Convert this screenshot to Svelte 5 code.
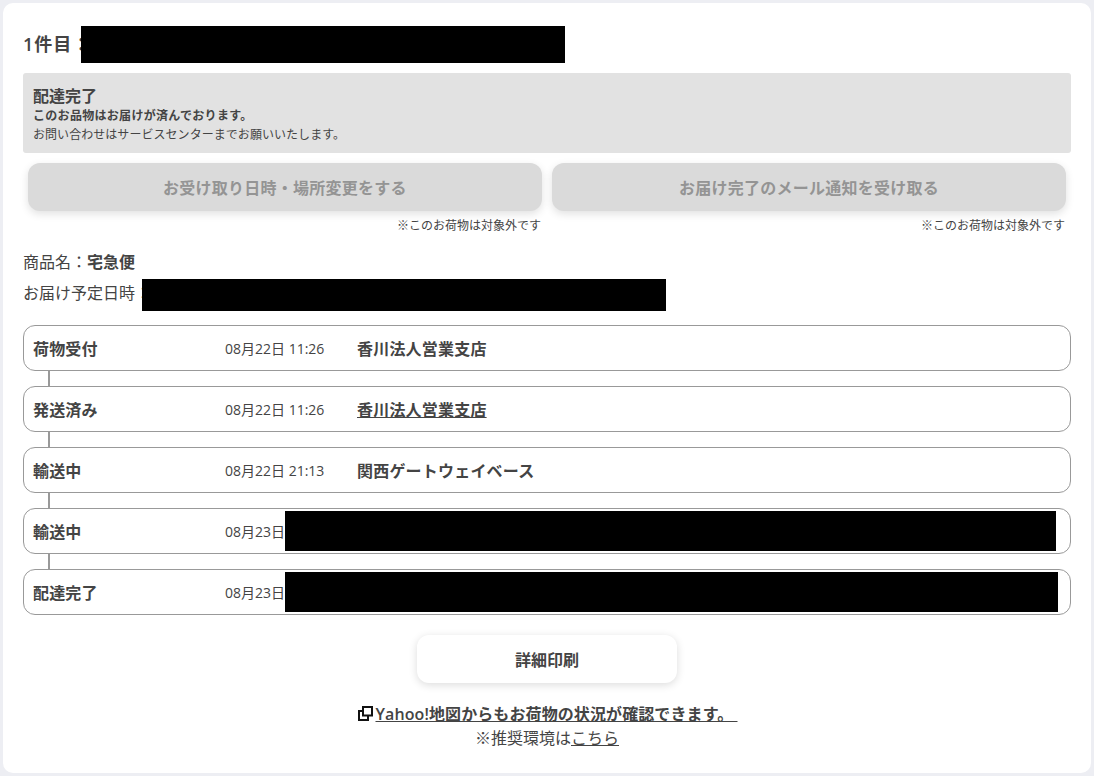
<script>
  const steps = [
    { label: "荷物受付", date: "08月22日 11:26", place: "香川法人営業支店" },
    { label: "発送済み", date: "08月22日 11:26", place: "香川法人営業支店", link: true },
    { label: "輸送中", date: "08月22日 21:13", place: "関西ゲートウェイベース" },
    { label: "輸送中", date: "08月23日", hidden: 771 },
    { label: "配達完了", date: "08月23日", hidden: 773 }
  ];
</script>

<div class="page">
  <div class="card">
    <h2 class="title">1件目：<span class="redact title-redact"></span></h2>

    <div class="status">
      <div class="status-head">配達完了</div>
      <div class="status-sub">このお品物はお届けが済んでおります。</div>
      <div class="status-note">お問い合わせはサービスセンターまでお願いいたします。</div>
    </div>

    <div class="actions">
      <div class="action">
        <div class="btn-off">お受け取り日時・場所変更をする</div>
        <div class="note">※このお荷物は対象外です</div>
      </div>
      <div class="action">
        <div class="btn-off">お届け完了のメール通知を受け取る</div>
        <div class="note">※このお荷物は対象外です</div>
      </div>
    </div>

    <div class="info">商品名：<b>宅急便</b></div>
    <div class="info due">お届け予定日時：<span class="redact due-redact"></span></div>

    <ul class="timeline">
      {#each steps as s, i}
        <li class="step" class:last={i === steps.length - 1}>
          <span class="label">{s.label}</span>
          <span class="date">{s.date}</span>
          {#if s.place}
            <span class="place" class:link={s.link}>{s.place}</span>
          {/if}
          {#if s.hidden}
            <span class="redact step-redact" style="width: {s.hidden}px"></span>
          {/if}
        </li>
      {/each}
    </ul>

    <div class="print-wrap">
      <div class="print">詳細印刷</div>
    </div>

    <div class="links">
      <div class="yahoo">
        <svg class="ext" viewBox="0 0 15 15" width="15" height="15" aria-hidden="true">
          <path d="M5 1h9v8.5H5z M5 5H1v9h9v-4.5" fill="none" stroke="#111" stroke-width="2"/>
        </svg><a href="#yahoo">Yahoo!地図からもお荷物の状況が確認できます。&nbsp;</a>
      </div>
      <div class="env">※推奨環境は<a href="#env">こちら</a></div>
    </div>
  </div>
</div>

<style>
  :global(body) {
    margin: 0;
    background: #edeef3;
    color: #444;
    font-family: "Open Sans", "Noto Sans CJK JP", sans-serif;
  }

  .page {
    padding: 3px;
    height: 776px;
    box-sizing: border-box;
  }

  .card {
    background: #fff;
    border-radius: 10px;
    height: 770px;
    box-sizing: border-box;
    padding: 23px 20px 0;
  }

  .title {
    position: relative;
    margin: 0 0 10px;
    height: 37px;
    line-height: 37px;
    font-size: 18px;
    font-weight: 600;
    letter-spacing: 1px;
  }

  .redact {
    position: absolute;
    background: #000;
  }

  .title-redact {
    left: 58px;
    top: 0;
    width: 484px;
    height: 37px;
  }

  .status {
    background: #e2e2e2;
    border-radius: 3px;
    height: 80px;
    box-sizing: border-box;
    padding: 12px 10px 0;
  }

  .status-head {
    font-size: 16px;
    font-weight: 600;
    line-height: 22px;
  }

  .status-sub {
    font-size: 12px;
    font-weight: 700;
    line-height: 18px;
    letter-spacing: 0.3px;
  }

  .status-note {
    font-size: 12px;
    line-height: 18px;
    margin-top: 1px;
    letter-spacing: 0.05px;
  }

  .actions {
    display: flex;
    gap: 10px;
    padding: 10px 5px 0;
  }

  .action {
    flex: 1;
  }

  .btn-off {
    height: 48px;
    line-height: 50px;
    background: #dadada;
    border-radius: 12px;
    text-align: center;
    color: #949494;
    font-size: 16px;
    font-weight: 700;
    letter-spacing: 0.25px;
    box-shadow: 0 3px 8px rgba(0, 0, 0, 0.12);
  }

  .note {
    text-align: right;
    font-size: 12px;
    line-height: 16px;
    margin-top: 7px;
    padding-right: 1px;
  }

  .info {
    position: relative;
    font-size: 16px;
    line-height: 22px;
    margin-top: 17px;
  }

  .info b {
    font-weight: 600;
  }

  .due {
    margin-top: 9px;
  }

  .due-redact {
    left: 119px;
    top: -3px;
    width: 524px;
    height: 32px;
  }

  .timeline {
    list-style: none;
    margin: 21px 0 0;
    padding: 0;
  }

  .step {
    position: relative;
    display: flex;
    align-items: center;
    height: 46px;
    box-sizing: border-box;
    border: 1px solid #999;
    border-radius: 12px;
    padding: 0 9px;
    margin-bottom: 15px;
    font-size: 16px;
  }

  .step::after {
    content: "";
    position: absolute;
    left: 24px;
    top: 45px;
    width: 2px;
    height: 15px;
    background: #999;
  }

  .step.last {
    margin-bottom: 0;
  }

  .step.last::after {
    display: none;
  }

  .label {
    width: 192px;
    font-weight: 600;
    letter-spacing: 0.15px;
  }

  .date {
    width: 132px;
    font-size: 14px;
  }

  .place {
    font-weight: 600;
    letter-spacing: 0.2px;
  }

  .place.link {
    text-decoration: underline;
  }

  .step-redact {
    left: 261px;
    top: 2px;
    height: 40px;
  }

  .print-wrap {
    display: flex;
    justify-content: center;
    margin-top: 20px;
  }

  .print {
    width: 260px;
    height: 48px;
    line-height: 50px;
    text-align: center;
    background: #fff;
    border-radius: 12px;
    font-size: 16px;
    font-weight: 600;
    box-shadow: 0 2px 8px rgba(0, 0, 0, 0.14);
  }

  .links {
    margin-top: 19px;
    text-align: center;
    font-size: 16px;
    line-height: 24px;
  }

  .links a {
    color: inherit;
    text-decoration: underline;
  }

  .yahoo {
    font-weight: 600;
    letter-spacing: 0.1px;
    padding-left: 2px;
  }

  .ext {
    vertical-align: -1px;
    margin-right: 2px;
  }
</style>
